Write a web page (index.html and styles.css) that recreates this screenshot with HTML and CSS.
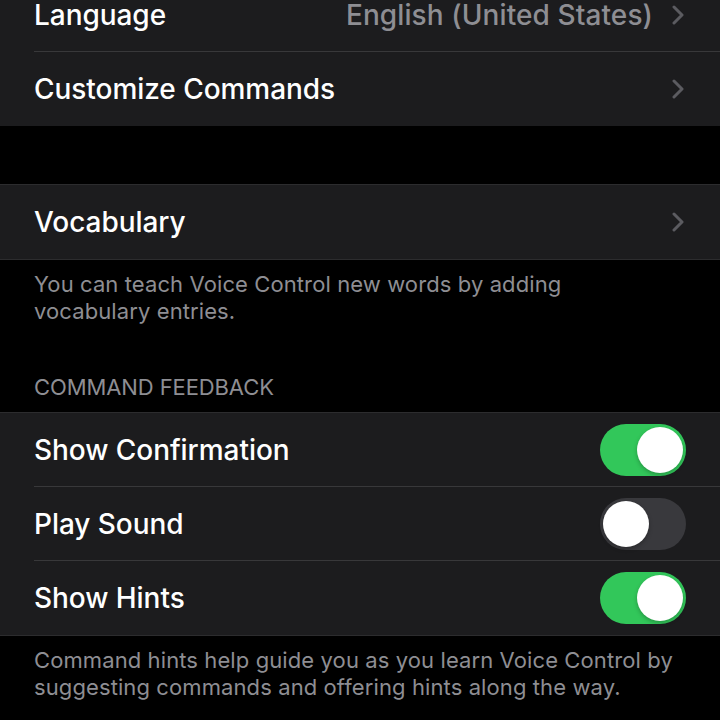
FILE: index.html
```html
<!DOCTYPE html>
<html>
<head>
<meta charset="utf-8">
<link rel="stylesheet" href="styles.css">
</head>
<body>
<div class="page">
  <section class="group first">
    <div class="row">
      <div class="row-inner sep">
        <span class="label">Language</span>
        <span class="value">English (United States)</span>
        <svg class="chev" viewBox="0 0 12 20" width="12" height="20"><path d="M2 2 L10 10 L2 18" fill="none" stroke="#5b5b60" stroke-width="3" stroke-linecap="round" stroke-linejoin="round"/></svg>
      </div>
    </div>
    <div class="row">
      <div class="row-inner">
        <span class="label">Customize Commands</span>
        <svg class="chev" viewBox="0 0 12 20" width="12" height="20"><path d="M2 2 L10 10 L2 18" fill="none" stroke="#5b5b60" stroke-width="3" stroke-linecap="round" stroke-linejoin="round"/></svg>
      </div>
    </div>
  </section>

  <section class="group bordered vocab">
    <div class="row">
      <div class="row-inner">
        <span class="label">Vocabulary</span>
        <svg class="chev" viewBox="0 0 12 20" width="12" height="20"><path d="M2 2 L10 10 L2 18" fill="none" stroke="#5b5b60" stroke-width="3" stroke-linecap="round" stroke-linejoin="round"/></svg>
      </div>
    </div>
  </section>
  <p class="footer">You can teach Voice Control new words by adding<br>vocabulary entries.</p>

  <h2 class="header">COMMAND FEEDBACK</h2>
  <section class="group bordered">
    <div class="row">
      <div class="row-inner sep">
        <span class="label">Show Confirmation</span>
        <span class="toggle on"><span class="knob"></span></span>
      </div>
    </div>
    <div class="row">
      <div class="row-inner sep">
        <span class="label">Play Sound</span>
        <span class="toggle off"><span class="knob"></span></span>
      </div>
    </div>
    <div class="row">
      <div class="row-inner">
        <span class="label">Show Hints</span>
        <span class="toggle on"><span class="knob"></span></span>
      </div>
    </div>
  </section>
  <p class="footer">Command hints help guide you as you learn Voice Control by<br>suggesting commands and offering hints along the way.</p>
</div>
</body>
</html>
```

FILE: styles.css
```css
html, body {
  margin: 0;
  padding: 0;
  background: #000;
  height: 720px;
  overflow: hidden;
}
body {
  font-family: Inter, Roboto, "Liberation Sans", sans-serif;
  color: #fff;
}
.page {
  margin-top: -22px;
}
.group {
  background: #1c1c1e;
}
.group.bordered {
  border-top: 1px solid #2c2c2e;
  border-bottom: 1px solid #2c2c2e;
}
.vocab {
  margin-top: 58px;
}
.row {
  padding-left: 34px;
}
.row-inner {
  height: 74px;
  display: flex;
  align-items: center;
  padding-right: 34px;
  box-sizing: border-box;
}
.row-inner.sep {
  border-bottom: 1px solid #38383a;
}
.label {
  font-size: 28px;
  font-weight: 500;
  line-height: 1;
  flex: 1;
  letter-spacing: -0.05px;
}
.value {
  font-size: 28px;
  font-weight: 500;
  line-height: 1;
  color: #8e8e93;
  margin-right: 19px;
  letter-spacing: 0.1px;
}
.chev {
  display: block;
  margin-right: 2px;
}
.footer {
  margin: 0;
  padding: 11px 34px 0 34px;
  font-size: 22px;
  line-height: 27px;
  color: #8e8e93;
  letter-spacing: 0.1px;
}
.header {
  margin: 0;
  padding: 49px 34px 11px 34px;
  font-size: 22px;
  line-height: 27px;
  font-weight: 400;
  color: #8e8e93;
  letter-spacing: -0.1px;
}
.toggle {
  width: 86px;
  height: 52px;
  border-radius: 26px;
  display: flex;
  align-items: center;
  padding: 0 3px;
  box-sizing: border-box;
}
.toggle.on {
  background: #32c75a;
  justify-content: flex-end;
}
.toggle.off {
  background: #39393d;
  justify-content: flex-start;
}
.knob {
  width: 46px;
  height: 46px;
  border-radius: 50%;
  background: #fff;
  box-shadow: 0 2px 4px rgba(0,0,0,0.25);
}
```
